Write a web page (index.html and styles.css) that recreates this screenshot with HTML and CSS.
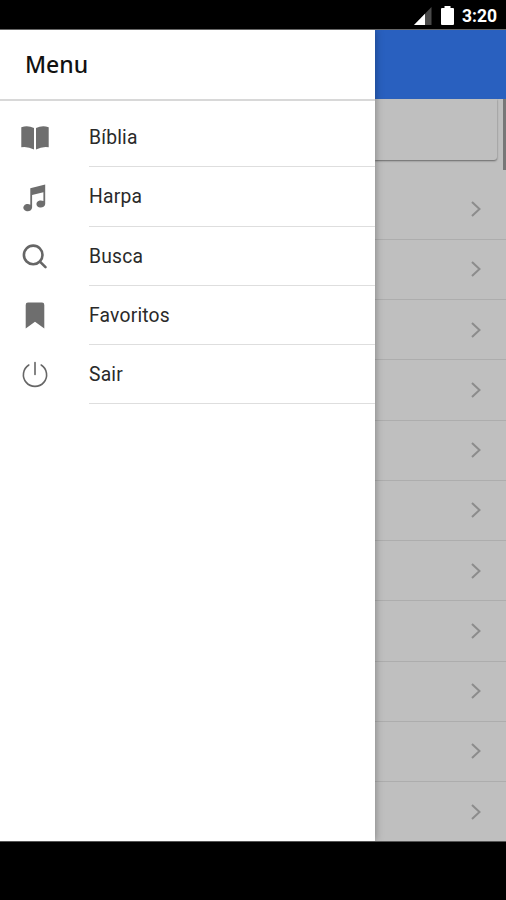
FILE: index.html
```html
<!DOCTYPE html>
<html lang="pt">
<head>
<meta charset="utf-8">
<title>Menu</title>
<link rel="stylesheet" href="styles.css">
</head>
<body>
<div class="status">
  <svg class="signal" width="18" height="18" viewBox="0 0 18 18"><path d="M17.500 0V18H0z" fill="#4a4a4a"/><path d="M11 6.700V18H0z" fill="#fff"/></svg>
  <svg class="battery" width="13" height="19" viewBox="0 0 13 19"><path d="M3.500 0h6v2H12q1 0 1 1v15q0 1-1 1H1q-1 0-1-1V3q0-1 1-1h2.500z" fill="#fff"/></svg>
  <span class="time">3:20</span>
</div>
<div class="screen">
  <nav class="drawer">
    <header class="title">Menu</header>
    <ul class="menu">
      <li><svg class="icon" viewBox="0 0 30 30"><path d="M1.300 3.200Q8 1.200 14 4V25.500Q8 22.200 1.300 23.200zM28.700 3.200Q22 1.200 16 4V25.500Q22 22.200 28.700 23.200z"/></svg><span>Bíblia</span></li>
      <li><svg class="icon" viewBox="0 0 30 30"><path d="M10.300 5.300L25.200 1.500V21a4.400 3.600 0 1 1-1.800-2.900V9.200L12.100 12V24.600a4.400 3.600 0 1 1-1.800-2.900z"/></svg><span>Harpa</span></li>
      <li><svg class="icon" viewBox="0 0 30 30"><g class="search"><circle cx="13.200" cy="12.900" r="9.300"/><path d="M19.900 19.600l5.600 5.600"/></g></svg><span>Busca</span></li>
      <li><svg class="icon" viewBox="0 0 30 30"><path d="M8 1.500H22Q24.300 1.500 24.300 3.900V27.600L15 20.800 5.700 27.600V3.900Q5.700 1.500 8 1.500z"/></svg><span>Favoritos</span></li>
      <li><svg class="icon" viewBox="0 0 30 30"><g class="power"><path d="M15 2.500V14.500M21.200 5A11.600 11.600 0 1 1 8.800 5"/></g></svg><span>Sair</span></li>
    </ul>
  </nav>
  <main class="page">
    <div class="toolbar"></div>
    <div class="search-area"><div class="field"></div><div class="thumb"></div></div>
    <ul class="rows">
      <li><svg viewBox="0 0 10 16"><path d="M1 1l7.500 7L1 15"/></svg></li>
      <li><svg viewBox="0 0 10 16"><path d="M1 1l7.500 7L1 15"/></svg></li>
      <li><svg viewBox="0 0 10 16"><path d="M1 1l7.500 7L1 15"/></svg></li>
      <li><svg viewBox="0 0 10 16"><path d="M1 1l7.500 7L1 15"/></svg></li>
      <li><svg viewBox="0 0 10 16"><path d="M1 1l7.500 7L1 15"/></svg></li>
      <li><svg viewBox="0 0 10 16"><path d="M1 1l7.500 7L1 15"/></svg></li>
      <li><svg viewBox="0 0 10 16"><path d="M1 1l7.500 7L1 15"/></svg></li>
      <li><svg viewBox="0 0 10 16"><path d="M1 1l7.500 7L1 15"/></svg></li>
      <li><svg viewBox="0 0 10 16"><path d="M1 1l7.500 7L1 15"/></svg></li>
      <li><svg viewBox="0 0 10 16"><path d="M1 1l7.500 7L1 15"/></svg></li>
      <li><svg viewBox="0 0 10 16"><path d="M1 1l7.500 7L1 15"/></svg></li>
    </ul>
  </main>
</div>
</body>
</html>
```
FILE: styles.css
```css
* { box-sizing: border-box; }

body {
  margin: 0;
  height: 900px;
  background: #000;
  font-family: Roboto, sans-serif;
  overflow: hidden;
}

ul { list-style: none; margin: 0; padding: 0; }

.status {
  height: 29px;
  display: flex;
  align-items: flex-start;
  justify-content: flex-end;
  padding: 6px 9px 0 0;
  color: #fff;
}

.signal { margin: 1px 9px 0 0; }
.battery { margin-right: 8px; }
.time { width: 35px; font-size: 17.500px; line-height: 20px; font-weight: 700; white-space: nowrap; }

.screen {
  height: 813px;
  display: flex;
  border-top: 1px solid #666;
  border-bottom: 1px solid #555;
}

.drawer {
  position: relative;
  z-index: 1;
  width: 375px;
  background: #fff;
  box-shadow: 0 0 8px rgba(0, 0, 0, .35);
  clip-path: inset(0 -20px 0 0);
}

.title {
  height: 71px;
  padding: 0 25px;
  border-bottom: 2px solid #d8d8d8;
  color: #111;
  font: 500 23px/68px "Noto Sans", sans-serif;
}

.menu { padding-top: 7.400px; }

.menu li {
  height: 59.100px;
  display: flex;
  align-items: center;
  padding-left: 20px;
}

.menu span {
  flex: 1;
  height: 100%;
  margin-left: 39px;
  border-bottom: 1.500px solid #dedede;
  color: #2a2a2a;
  font-size: 19.300px;
  line-height: 60px;
  letter-spacing: .2px;
}

.icon { width: 30px; height: 30px; margin-top: 2px; fill: #6e6e6e; }
.search, .power { fill: none; stroke: #666; }
.search { stroke-width: 2.600; stroke-linecap: round; }
.power { stroke-width: 1.600; stroke-linecap: round; }

.page { flex: 1; background: #bfbfbf; overflow: hidden; }
.toolbar { height: 69px; background: #2960bf; }

.search-area {
  height: 80.500px;
  display: flex;
  justify-content: space-between;
}

.field {
  width: 122px;
  height: 61px;
  border-radius: 0 0 3px 0;
  box-shadow: 0 1px 2px #666;
}

.thumb { width: 3px; height: 71px; background: #777; }

.rows li {
  height: 60.250px;
  display: flex;
  align-items: center;
  justify-content: flex-end;
  padding-right: 25px;
  border-bottom: 1.500px solid #adadad;
}

.rows li:last-child { border-bottom: 0; }

.rows svg {
  width: 10px;
  height: 16px;
  fill: none;
  stroke: #8c8c8c;
  stroke-width: 2;
}
```
